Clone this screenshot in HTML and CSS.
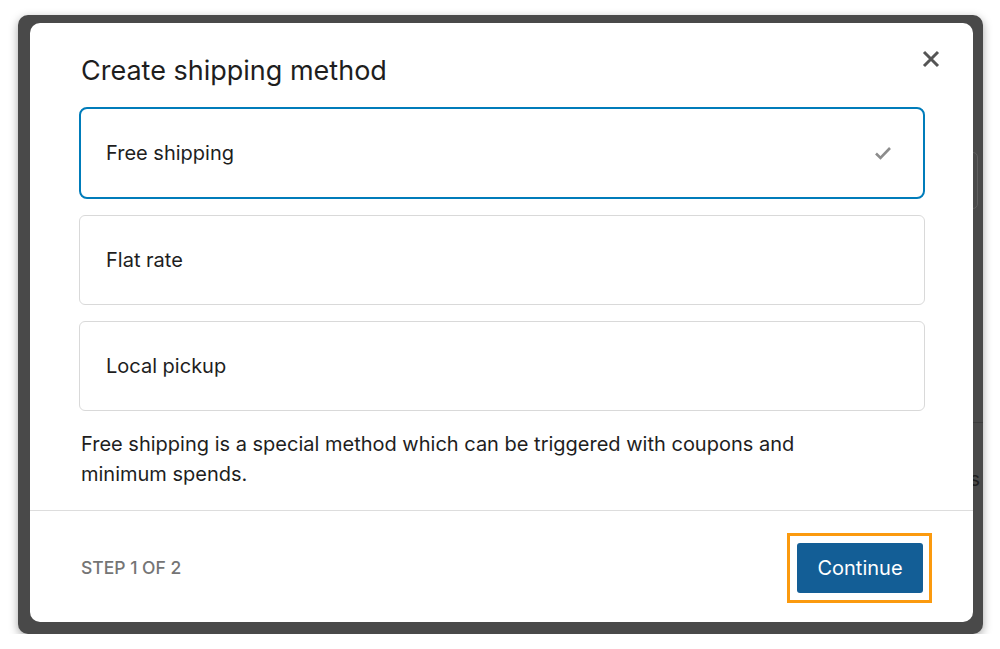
FILE: index.html
```html
<!DOCTYPE html>
<html lang="en">
<head>
  <meta charset="UTF-8" />
  <title>Create shipping method</title>
  <link rel="stylesheet" href="styles.css">
</head>
<body>
  <div class="window">
    <!-- bits of the page behind the overlay -->
    <div class="peek-input"></div>
    <div class="peek-line"></div>
    <span class="peek-text">Methods</span>

    <div class="modal">
      <div class="modal-header">
        <h1>Create shipping method</h1>
        <button class="close" aria-label="Close">
          <svg width="18" height="18" viewBox="0 0 18 18"><path d="M2 2L16 16M16 2L2 16" stroke="#555" stroke-width="3"/></svg>
        </button>
      </div>

      <div class="modal-body">
        <div class="option selected">
          <span>Free shipping</span>
          <svg class="check" width="18" height="14" viewBox="0 0 18 14"><path d="M2 7.5L6.5 12L16 2" fill="none" stroke="#8c8c8c" stroke-width="2.6"/></svg>
        </div>
        <div class="option"><span>Flat rate</span></div>
        <div class="option"><span>Local pickup</span></div>
        <p class="desc">Free shipping is a special method which can be triggered with coupons and minimum spends.</p>
      </div>

      <div class="modal-footer">
        <span class="step">Step 1 of 2</span>
        <button class="continue">Continue</button>
      </div>
    </div>
  </div>
</body>
</html>
```

FILE: styles.css
```css
body {
  margin: 0;
  background-color: #fff;
  font-family: 'Inter', sans-serif;
  color: #1e1e1e;
}

.window {
  position: relative;
  overflow: hidden;
  width: 943px;
  height: 599px;
  margin: 15px 0 0 18px;
  padding: 8px 10px 12px 12px;
  background-color: #494949;
  border-radius: 10px;
  box-shadow: 0 3px 10px rgba(0, 0, 0, 0.35);
}

.peek-input {
  position: absolute;
  top: 137px;
  right: 5px;
  width: 60px;
  height: 55px;
  border: 1px solid #5f5f5f;
  border-radius: 5px;
}

.peek-line {
  position: absolute;
  top: 407px;
  right: 0;
  width: 30px;
  height: 1px;
  background-color: #3c3c3c;
}

.peek-text {
  position: absolute;
  top: 452px;
  right: 3px;
  font-size: 20px;
  color: #1f1f1f;
}

.modal {
  position: relative;
  z-index: 1;
  height: 100%;
  background-color: #fff;
  border-radius: 10px;
  display: flex;
  flex-direction: column;
}

.modal-header {
  display: flex;
  justify-content: space-between;
  align-items: flex-start;
  padding: 27px 33px 0 49px;
}

h1 {
  margin: 3px 0 0 2px;
  font-size: 27px;
  font-weight: 400;
  line-height: 36px;
}

.close {
  border: none;
  background: none;
  padding: 0;
  width: 18px;
  height: 18px;
}

.modal-body {
  flex: 1;
  padding: 18px 48px 0 49px;
}

.option {
  box-sizing: border-box;
  height: 90px;
  border: 1px solid #d9d9d9;
  border-radius: 6px;
  margin-bottom: 16px;
  display: flex;
  align-items: center;
  justify-content: space-between;
  padding: 0 32px 0 26px;
  font-size: 20px;
}

.option.selected {
  height: 92px;
  border: 2px solid #007cba;
  border-radius: 8px;
  padding-left: 25px;
  padding-right: 31px;
}

.desc {
  max-width: 760px;
  margin: 18px 0 0 2px;
  font-size: 20px;
  line-height: 30px;
}

.modal-footer {
  box-sizing: border-box;
  height: 112px;
  border-top: 1px solid #ddd;
  display: flex;
  align-items: center;
  justify-content: space-between;
  padding: 2px 50px 0 51px;
}

.step {
  text-transform: uppercase;
  color: #757575;
  font-size: 17.5px;
  font-weight: 500;
}

.continue {
  position: relative;
  width: 126px;
  height: 50px;
  border: none;
  border-radius: 3px;
  background-color: #135e96;
  color: #fff;
  font-family: 'Inter', sans-serif;
  font-size: 20px;
}

.continue::after {
  content: "";
  position: absolute;
  top: -10px;
  left: -10px;
  right: -9px;
  bottom: -10px;
  border: 3px solid #fb9a0e;
}
```
